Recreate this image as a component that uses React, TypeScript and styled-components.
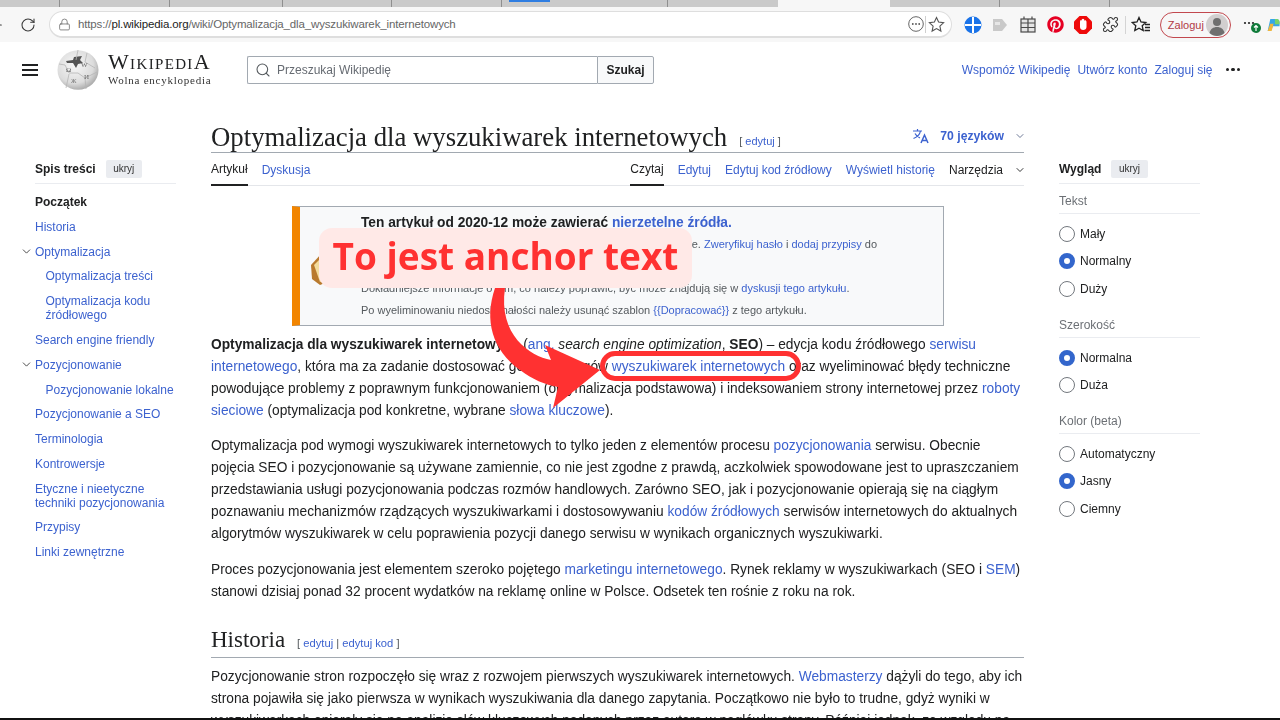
import styled, { createGlobalStyle } from "styled-components";
import { ArrowLeft, ChevronDown, Lock, Puzzle, RotateCw, Search } from "lucide-react";
import { FaPinterest } from "react-icons/fa";

const GlobalStyle = createGlobalStyle`
  html, body { margin: 0; padding: 0; background: #fff; }
  * { box-sizing: border-box; }
  body { font-family: "Liberation Sans", Arial, sans-serif; color: #202122; }
  a { color: #3c62cf; text-decoration: none; }
`;

const Page = styled.div`
  position: relative;
  width: 1280px;
  height: 720px;
  overflow: hidden;
  background: #fff;
`;
// the reference is a slightly soft capture, the annotation sits on top of it
const Capture = styled.div`
  height: 720px;
  display: flex;
  flex-direction: column;
  filter: blur(0.35px);
`;

/* browser chrome */
const TabStrip = styled.div`
  height: 7px;
  display: flex;
  background: #cacaca;
  flex-shrink: 0;
`;
const TabCell = styled.div<{ $w: number; $active?: boolean; $sep?: boolean }>`
  width: ${(p) => p.$w}px;
  height: 100%;
  background: ${(p) => (p.$active ? "#f7f7f7" : "transparent")};
  border-right: ${(p) => (p.$sep ? "1px solid #8f8f8f" : "none")};
`;
const BlueTab = styled.div`
  width: 41px;
  height: 2px;
  background: #2f7de1;
`;
const Toolbar = styled.div`
  height: 35px;
  background: #f7f7f7;
  display: flex;
  align-items: center;
  flex-shrink: 0;
  color: #3a3a3a;
`;
const NavIcons = styled.div`
  width: 49px;
  margin-left: -13px;
  display: flex;
  align-items: center;
  gap: 15px;
  flex-shrink: 0;
`;
const UrlBar = styled.div`
  width: 903px;
  height: 27px;
  margin-left: 13px;
  background: #fff;
  border: 1px solid #dedede;
  border-bottom-width: 2px;
  border-radius: 14px;
  display: flex;
  align-items: center;
  padding: 0 6px 0 8px;
  flex-shrink: 0;
`;
const UrlText = styled.div`
  margin-left: 7px;
  font-size: 11.5px;
  letter-spacing: -0.14px;
  color: #666;
  flex: 1;
  white-space: nowrap;
  b { font-weight: 400; color: #1c1c1c; }
`;
const UrlDivider = styled.span`
  width: 1px;
  height: 17px;
  background: #cfcfcf;
  margin: 0 2px 0 1.5px;
`;
const ExtSlot = styled.div<{ $gap?: number }>`
  width: 27.6px;
  margin-left: ${(p) => p.$gap ?? 0}px;
  display: flex;
  justify-content: center;
  align-items: center;
  flex-shrink: 0;
`;
const ExtRow = styled.div`
  display: flex;
  align-items: center;
  margin-left: 7px;
`;
const ToolDivider = styled.span`
  width: 1px;
  height: 18px;
  background: #d4d4d4;
`;
const LoginPill = styled.div`
  width: 71px;
  height: 26px;
  margin-left: 5px;
  border: 1.5px solid #c2484e;
  border-radius: 13px;
  display: flex;
  align-items: center;
  justify-content: space-between;
  padding: 0 2px 0 7px;
  font-size: 11px;
  color: #b23a46;
  flex-shrink: 0;
`;
const OverflowDots = styled.div`
  width: 24px;
  margin-left: 12px;
  display: flex;
  flex-shrink: 0;
`;

/* wikipedia header */
const WikiHeader = styled.header`
  height: 55px;
  display: flex;
  align-items: center;
  padding-left: 22px;
  flex-shrink: 0;
`;
const Burger = styled.div`
  width: 16px;
  height: 12px;
  border-top: 2px solid #202122;
  border-bottom: 2px solid #202122;
  display: flex;
  align-items: center;
  flex-shrink: 0;
  &::before {
    content: "";
    display: block;
    width: 100%;
    height: 2px;
    background: #202122;
  }
`;
const Logo = styled.div`
  margin-left: 19px;
  display: flex;
  align-items: center;
  gap: 9px;
  width: 190px;
  flex-shrink: 0;
`;
const LogoText = styled.div`
  font-family: "Liberation Serif", serif;
  color: #202122;
  display: flex;
  flex-direction: column;
  margin-top: -2px;
`;
const WordMark = styled.div`
  font-size: 22px;
  line-height: 22px;
  font-variant: small-caps;
  letter-spacing: 1.35px;
  white-space: nowrap;
`;
const Tagline = styled.div`
  font-size: 11px;
  line-height: 14px;
  letter-spacing: 0.75px;
  white-space: nowrap;
  color: #333;
`;
const SearchForm = styled.div`
  width: 407px;
  height: 28px;
  display: flex;
  flex-shrink: 0;
`;
const SearchBox = styled.div`
  flex: 1;
  border: 1px solid #a2a9b1;
  border-right: none;
  border-radius: 2px 0 0 2px;
  display: flex;
  align-items: center;
  padding-left: 7px;
  gap: 6px;
  font-size: 12px;
  color: #666b72;
`;
const SearchButton = styled.div`
  width: 57px;
  border: 1px solid #a2a9b1;
  border-radius: 0 2px 2px 0;
  background: #f8f9fa;
  font-size: 12px;
  font-weight: 700;
  display: flex;
  align-items: center;
  justify-content: center;
  color: #202122;
`;
const UserLinks = styled.nav`
  margin-left: auto;
  margin-right: 40px;
  display: flex;
  align-items: center;
  gap: 7px;
  font-size: 12px;
  white-space: nowrap;
`;
const MoreDots = styled.div`
  display: flex;
  gap: 2px;
  margin-left: 6px;
  i {
    width: 3.5px;
    height: 3.5px;
    border-radius: 50%;
    background: #202122;
    display: block;
  }
`;

/* page columns */
const Columns = styled.div`
  flex: 1;
  min-height: 0;
  overflow: hidden;
  display: grid;
  grid-template-columns: 141px 813px 141px;
  column-gap: 35px;
  padding-left: 35px;
`;
const SideColumn = styled.aside`
  padding-top: 62px;
`;
const SideHead = styled.div`
  height: 25px;
  display: flex;
  align-items: center;
  gap: 10px;
  border-bottom: 1px solid #eaecf0;
  padding-bottom: 5px;
  font-size: 12px;
  font-weight: 700;
`;
const HideButton = styled.span`
  font-size: 10px;
  font-weight: 400;
  background: #eaecf0;
  border-radius: 2px;
  padding: 0 7.5px;
  height: 18px;
  display: inline-flex;
  align-items: center;
  color: #333;
`;
const TocList = styled.div`
  padding-top: 6px;
  display: flex;
  flex-direction: column;
`;
const TocItem = styled.a<{ $sub?: boolean; $current?: boolean }>`
  display: flex;
  align-items: flex-start;
  padding: 5.1px 0 5.7px ${(p) => (p.$sub ? "10.5px" : "0")};
  font-size: 12px;
  line-height: 14px;
  color: ${(p) => (p.$current ? "#202122" : "#3c62cf")};
  font-weight: ${(p) => (p.$current ? 700 : 400)};
  svg { margin: 0 2px 0 -15px; flex-shrink: 0; color: #333; }
`;
const AppearanceGroup = styled.div`
  padding-top: 5px;
  & + & { margin-top: 5.25px; }
`;
const GroupTitle = styled.div`
  font-size: 12px;
  line-height: 14px;
  color: #6c7075;
  padding: 5px 0 5px;
  border-bottom: 1px solid #eaecf0;
  margin-bottom: 6px;
`;
const RadioRow = styled.div`
  display: flex;
  align-items: center;
  gap: 5px;
  height: 27.5px;
  font-size: 12px;
  color: #202122;
`;
const RadioDot = styled.span<{ $on?: boolean }>`
  width: 16px;
  height: 16px;
  border-radius: 50%;
  flex-shrink: 0;
  background: #fff;
  border: ${(p) => (p.$on ? "5px solid #3366cc" : "1px solid #72777d")};
`;

/* article */
const Article = styled.main`
  min-width: 0;
`;
const TitleRow = styled.div`
  height: 56px;
  padding-top: 25px;
  border-bottom: 1px solid #a2a9b1;
  display: flex;
  align-items: flex-start;
  white-space: nowrap;
`;
const Title = styled.h1`
  margin: 0;
  font: 400 26.75px/30px "Liberation Serif", serif;
  color: #202122;
`;
const EditLinks = styled.span`
  font-size: 11px;
  color: #54595d;
  margin-left: 12px;
  margin-top: 13px;
`;
const Languages = styled.div`
  margin-left: auto;
  margin-right: -2px;
  display: flex;
  align-items: center;
  font-size: 12.2px;
  font-weight: 700;
  color: #3c62cf;
  gap: 10px;
  margin-top: 6px;
  svg:last-child { color: #5f6b8c; }
`;
const TabsRow = styled.div`
  height: 33px;
  border-bottom: 1px solid #e4e6ea;
  display: flex;
  align-items: stretch;
  font-size: 12px;
  gap: 14px;
`;
const ArticleTab = styled.a<{ $active?: boolean; $plain?: boolean }>`
  display: flex;
  align-items: center;
  gap: 11px;
  height: 33px;
  color: ${(p) => (p.$active || p.$plain ? "#202122" : "#3c62cf")};
  border-bottom: ${(p) => (p.$active ? "2px solid #202122" : "none")};
  margin-right: ${(p) => (p.$plain ? "-2px" : "0")};
`;
const TabSpacer = styled.div`
  flex: 1;
`;
const Notice = styled.div`
  width: 652px;
  height: 120px;
  margin: 20px 0 8px 81px;
  border: 1px solid #a2a9b1;
  border-left: 8px solid #f28500;
  background: #f8f9fa;
  display: flex;
  overflow: hidden;
`;
const NoticeIcon = styled.div`
  width: 61px;
  padding: 44px 0 0 9px;
  flex-shrink: 0;
`;
const NoticeBody = styled.div`
  padding-top: 5px;
  font-size: 11px;
  line-height: 22px;
  color: #54595d;
  white-space: nowrap;
`;
const NoticeHead = styled.div`
  font-size: 13.74px;
  font-weight: 700;
  height: 21px;
  color: #202122;
`;
const Paragraph = styled.p<{ $tail?: number }>`
  margin: 0 0 ${(p) => p.$tail ?? 13}px;
  font-size: 13.74px;
  line-height: 22px;
  color: #202122;
`;
const SectionHead = styled.div`
  margin-top: 23px;
  height: 32px;
  border-bottom: 1px solid #a2a9b1;
  display: flex;
  align-items: baseline;
  gap: 12px;
  margin-bottom: 8px;
`;
const SectionTitle = styled.h2`
  margin: 0;
  font: 400 23px/28px "Liberation Serif", serif;
  color: #202122;
`;
const SectionEdit = styled.span`
  font-size: 11.2px;
  color: #54595d;
`;
const BottomEdge = styled.div`
  height: 2px;
  background: #111;
  flex-shrink: 0;
`;

/* annotation drawn over the screenshot */
const Callout = styled.div`
  position: absolute;
  left: 319px;
  top: 228px;
  width: 373px;
  height: 60px;
  border-radius: 13px;
  background: #ffe9e7;
  color: #ff3131;
  font: 700 37px/55px "Open Sans", sans-serif;
  text-align: center;
  white-space: nowrap;
`;
const LinkRing = styled.div`
  position: absolute;
  left: 600px;
  top: 351px;
  width: 201px;
  height: 30px;
  border: 5px solid #ff3131;
  border-radius: 15px;
`;
const ArrowLayer = styled.svg`
  position: absolute;
  left: 470px;
  top: 280px;
`;

const Globe = () => (
  <svg width="42" height="40" viewBox="0 0 42 40">
    <defs>
      <radialGradient id="gl" cx="42%" cy="38%" r="70%">
        <stop offset="0%" stopColor="#f8f8f8" />
        <stop offset="65%" stopColor="#dcdcdc" />
        <stop offset="100%" stopColor="#9a9a9a" />
      </radialGradient>
    </defs>
    <ellipse cx="21" cy="20" rx="20.5" ry="19.8" fill="url(#gl)" />
    <path d="M9 11l7-1 1-3 8-1-2 4 3 3-5 1-2 4-3-5-6 0z" fill="#555" />
    <path d="M2 14l6 1 4 8 9 0 7 5 12-6M21 0l-2 10M12 24l-3 14M28 28l1 11M30 3l-2 9 10 6" stroke="#b5b5b5" strokeWidth="0.8" fill="none" />
    <text x="9" y="22" fontSize="7" fill="#555" fontFamily="Liberation Serif">Ω</text>
    <text x="24" y="17" fontSize="7" fill="#666" fontFamily="Liberation Serif">W</text>
    <text x="27" y="29" fontSize="7" fill="#666" fontFamily="Liberation Serif">И</text>
    <text x="14" y="33" fontSize="6" fill="#777" fontFamily="Liberation Serif">Ж</text>
  </svg>
);

const TranslateIcon = () => (
  <svg width="18" height="16" viewBox="0 0 18 16" fill="none" stroke="#3c62cf" strokeWidth="1.2">
    <path d="M1 3h9M5.500 1v2M8.500 3c-.6 3-3 6-7 7.500M3 5.500c1 2 3 3.500 5 4.500" />
    <path d="M9 15l3.500-8 3.500 8M10.200 12.500h4.600" strokeWidth="1.500" />
  </svg>
);

const BookIcon = () => (
  <svg width="26" height="36" viewBox="0 0 26 36">
    <path d="M2 14L13 2l13 6v20L11 34 3 28z" fill="#b97a2e" />
    <path d="M5 14L14 5l12 5v16L11 31z" fill="#f3dc9c" />
  </svg>
);

const BlueCross = () => (
  <svg width="18" height="18" viewBox="0 0 18 18">
    <circle cx="9" cy="9" r="8.500" fill="#1a73e8" />
    <path d="M9 1v16M1 9h16" stroke="#fff" strokeWidth="2" />
  </svg>
);
const GrayTag = () => (
  <svg width="16" height="14" viewBox="0 0 16 14">
    <path d="M1 1h9l5 6-5 6H1z" fill="#c9c9c9" />
    <path d="M3 4h5v3H3z" fill="#e6e6e6" />
  </svg>
);
const CalendarIcon = () => (
  <svg width="16" height="17" viewBox="0 0 16 17" fill="none" stroke="#4a4a4a" strokeWidth="1.200">
    <rect x="1" y="3" width="14" height="13" fill="#e4e4e4" />
    <path d="M1 7h14M1 11.500h14M8 3v13M4 0.500v2.500M12 0.500v2.500" />
  </svg>
);
const StopIcon = () => (
  <svg width="18" height="18" viewBox="0 0 18 18">
    <path d="M5.500 0h7L18 5.500v7L12.500 18h-7L0 12.500v-7z" fill="#ee0a0a" />
    <path d="M6 6.500c0-3 1.500-3 1.500-1.500 0-3 3-3 3 0 0-1.500 2-1 2 1v5c0 2-1.500 3-3.300 3S6 13 6 11z" fill="#fff" />
  </svg>
);
const StarList = () => (
  <svg width="20" height="18" viewBox="0 0 20 18" fill="none" stroke="#222" strokeWidth="1.300">
    <path d="M8 1.500l2 4.500 4.800.5-3.600 3.200 1 4.800L8 12.200l-4.200 2.300 1-4.800L1.200 6.500 6 6z" />
    <path d="M14 8.500h5M14 11.500h5M13.500 14.500h5.500" />
  </svg>
);
const OutlineStar = () => (
  <svg width="17" height="17" viewBox="0 0 17 17" fill="none" stroke="#555" strokeWidth="1.100">
    <path d="M8.500 1.500l2.100 4.600 5 .6-3.700 3.400 1 5-4.400-2.500-4.400 2.500 1-5L1.400 6.700l5-.6z" />
  </svg>
);
const DotsCircle = () => (
  <svg width="16" height="16" viewBox="0 0 16 16" fill="none">
    <circle cx="8" cy="8" r="7.300" stroke="#666" strokeWidth="1" />
    <circle cx="4.800" cy="8" r="0.900" fill="#555" />
    <circle cx="8" cy="8" r="0.900" fill="#555" />
    <circle cx="11.200" cy="8" r="0.900" fill="#555" />
  </svg>
);
const Avatar = () => (
  <svg width="22" height="22" viewBox="0 0 22 22">
    <circle cx="11" cy="11" r="11" fill="#d2cfcf" />
    <circle cx="11" cy="8" r="4" fill="#6f6f6f" />
    <path d="M3.500 19c.8-4 3.800-6 7.500-6s6.700 2 7.500 6c-4 4-11 4-15 0z" fill="#6f6f6f" />
  </svg>
);
const UpdateDots = () => (
  <svg width="24" height="18" viewBox="0 0 24 18">
    <circle cx="2" cy="7" r="1.100" fill="#222" />
    <circle cx="6" cy="7" r="1.100" fill="#222" />
    <circle cx="10" cy="7" r="1.100" fill="#222" />
    <circle cx="13" cy="12" r="5" fill="#0f7b3a" />
    <path d="M13 15V9.500M11 11.500l2-2 2 2" stroke="#fff" strokeWidth="1.200" fill="none" />
  </svg>
);
const CopilotIcon = () => (
  <svg width="20" height="20" viewBox="0 0 20 20">
    <path d="M5 1h9c3 0 5 2 5 5v6H9l-3 7H1z" fill="#35a7e8" />
    <path d="M12 1h3c3 0 4 2 4 5v3h-7z" fill="#79d36a" />
    <path d="M1 19l4-11h5l-3 11z" fill="#f2b63c" />
  </svg>
);

const tocItems: { label: string; sub?: boolean; current?: boolean; fold?: boolean }[] = [
  { label: "Początek", current: true },
  { label: "Historia" },
  { label: "Optymalizacja", fold: true },
  { label: "Optymalizacja treści", sub: true },
  { label: "Optymalizacja kodu źródłowego", sub: true },
  { label: "Search engine friendly" },
  { label: "Pozycjonowanie", fold: true },
  { label: "Pozycjonowanie lokalne", sub: true },
  { label: "Pozycjonowanie a SEO" },
  { label: "Terminologia" },
  { label: "Kontrowersje" },
  { label: "Etyczne i nieetyczne techniki pozycjonowania" },
  { label: "Przypisy" },
  { label: "Linki zewnętrzne" },
];

const appearance = [
  { title: "Tekst", options: ["Mały", "Normalny", "Duży"], on: 1 },
  { title: "Szerokość", options: ["Normalna", "Duża"], on: 0 },
  { title: "Kolor (beta)", options: ["Automatyczny", "Jasny", "Ciemny"], on: 1 },
];

const App = () => {
  return (
    <Page>
      <GlobalStyle />
      <Capture>
        <TabStrip>
          <TabCell $w={60} $sep />
          <TabCell $w={110} $sep />
          <TabCell $w={113} $sep />
          <TabCell $w={109} $sep />
          <TabCell $w={110} $sep />
          <TabCell $w={7} />
          <BlueTab />
          <TabCell $w={118} $sep />
          <TabCell $w={110} />
          <TabCell $w={112} $active />
          <TabCell $w={110} $sep />
          <TabCell $w={110} $sep />
        </TabStrip>
        <Toolbar>
          <NavIcons>
            <ArrowLeft size={18} strokeWidth={1.6} />
            <RotateCw size={16} strokeWidth={1.6} />
          </NavIcons>
          <UrlBar>
            <Lock size={13} strokeWidth={1.4} color="#666" />
            <UrlText>
              https://<b>pl.wikipedia.org</b>/wiki/Optymalizacja_dla_wyszukiwarek_internetowych
            </UrlText>
            <DotsCircle />
            <UrlDivider />
            <OutlineStar />
          </UrlBar>
          <ExtRow>
            <ExtSlot><BlueCross /></ExtSlot>
            <ExtSlot><GrayTag /></ExtSlot>
            <ExtSlot><CalendarIcon /></ExtSlot>
            <ExtSlot><FaPinterest size={17} color="#e60023" /></ExtSlot>
            <ExtSlot><StopIcon /></ExtSlot>
            <ExtSlot><Puzzle size={17} strokeWidth={1.5} color="#333" /></ExtSlot>
          </ExtRow>
          <ToolDivider />
          <ExtSlot $gap={2}><StarList /></ExtSlot>
          <LoginPill>
            Zaloguj
            <Avatar />
          </LoginPill>
          <OverflowDots><UpdateDots /></OverflowDots>
          <CopilotIcon />
        </Toolbar>

        <WikiHeader>
          <Burger />
          <Logo>
            <Globe />
            <LogoText>
              <WordMark>WikipediA</WordMark>
              <Tagline>Wolna encyklopedia</Tagline>
            </LogoText>
          </Logo>
          <SearchForm>
            <SearchBox>
              <Search size={16} strokeWidth={1.6} color="#54595d" />
              Przeszukaj Wikipedię
            </SearchBox>
            <SearchButton>Szukaj</SearchButton>
          </SearchForm>
          <UserLinks>
            <a>Wspomóż Wikipedię</a>
            <a>Utwórz konto</a>
            <a>Zaloguj się</a>
            <MoreDots><i /><i /><i /></MoreDots>
          </UserLinks>
        </WikiHeader>

        <Columns>
          <SideColumn>
            <SideHead>
              Spis treści <HideButton>ukryj</HideButton>
            </SideHead>
            <TocList>
              {tocItems.map((item, i) => (
                <TocItem key={i} $sub={item.sub} $current={item.current}>
                  {item.fold && <ChevronDown size={13} strokeWidth={1.6} />}
                  <span>{item.label}</span>
                </TocItem>
              ))}
            </TocList>
          </SideColumn>

          <Article>
            <TitleRow>
              <Title>Optymalizacja dla wyszukiwarek internetowych</Title>
              <EditLinks>[ <a>edytuj</a> ]</EditLinks>
              <Languages>
                <TranslateIcon />
                70 języków
                <ChevronDown size={12} strokeWidth={1.8} />
              </Languages>
            </TitleRow>
            <TabsRow>
              <ArticleTab $active>Artykuł</ArticleTab>
              <ArticleTab>Dyskusja</ArticleTab>
              <TabSpacer />
              <ArticleTab $active>Czytaj</ArticleTab>
              <ArticleTab>Edytuj</ArticleTab>
              <ArticleTab>Edytuj kod źródłowy</ArticleTab>
              <ArticleTab>Wyświetl historię</ArticleTab>
              <ArticleTab $plain>
                Narzędzia
                <ChevronDown size={12} strokeWidth={1.8} />
              </ArticleTab>
            </TabsRow>

            <Notice>
              <NoticeIcon><BookIcon /></NoticeIcon>
              <NoticeBody>
                <NoticeHead>Ten artykuł od 2020-12 może zawierać <a>nierzetelne źródła.</a></NoticeHead>
                <div>Niektóre informacje w tym tekście mogą być wątpliwe lub nieaktualne. <a>Zweryfikuj hasło</a> i <a>dodaj przypisy</a> do</div>
                <div>wiarygodnych źródeł.</div>
                <div>Dokładniejsze informacje o tym, co należy poprawić, być może znajdują się w <a>dyskusji tego artykułu</a>.</div>
                <div>Po wyeliminowaniu niedoskonałości należy usunąć szablon <a>{"{{Dopracować}}"}</a> z tego artykułu.</div>
              </NoticeBody>
            </Notice>

            <Paragraph>
              <b>Optymalizacja dla wyszukiwarek internetowych</b> (<a>ang.</a> <i>search engine optimization</i>, <b>SEO</b>) – edycja kodu źródłowego <a>serwisu internetowego</a>, która ma za zadanie dostosować go do wymogów <a>wyszukiwarek internetowych</a> oraz wyeliminować błędy techniczne powodujące problemy z poprawnym funkcjonowaniem (optymalizacja podstawowa) i indeksowaniem strony internetowej przez <a>roboty sieciowe</a> (optymalizacja pod konkretne, wybrane <a>słowa kluczowe</a>).
            </Paragraph>
            <Paragraph $tail={14}>
              Optymalizacja pod wymogi wyszukiwarek internetowych to tylko jeden z elementów procesu <a>pozycjonowania</a> serwisu. Obecnie pojęcia SEO i pozycjonowanie są używane zamiennie, co nie jest zgodne z prawdą, aczkolwiek spowodowane jest to upraszczaniem przedstawiania usługi pozycjonowania podczas rozmów handlowych. Zarówno SEO, jak i pozycjonowanie opierają się na ciągłym poznawaniu mechanizmów rządzących wyszukiwarkami i dostosowywaniu <a>kodów źródłowych</a> serwisów internetowych do aktualnych algorytmów wyszukiwarek w celu poprawienia pozycji danego serwisu w wynikach organicznych wyszukiwarki.
            </Paragraph>
            <Paragraph $tail={0}>
              Proces pozycjonowania jest elementem szeroko pojętego <a>marketingu internetowego</a>. Rynek reklamy w wyszukiwarkach (SEO i <a>SEM</a>) stanowi dzisiaj ponad 32 procent wydatków na reklamę online w Polsce. Odsetek ten rośnie z roku na rok.
            </Paragraph>

            <SectionHead>
              <SectionTitle>Historia</SectionTitle>
              <SectionEdit>[ <a>edytuj</a> | <a>edytuj kod</a> ]</SectionEdit>
            </SectionHead>
            <Paragraph>
              Pozycjonowanie stron rozpoczęło się wraz z rozwojem pierwszych wyszukiwarek internetowych. <a>Webmasterzy</a> dążyli do tego, aby ich strona pojawiła się jako pierwsza w wynikach wyszukiwania dla danego zapytania. Początkowo nie było to trudne, gdyż wyniki w wyszukiwarkach opierały się na analizie słów kluczowych podanych przez autora w nagłówku strony. Później jednak, ze względu na ich
            </Paragraph>
          </Article>

          <SideColumn>
            <SideHead>
              Wygląd <HideButton>ukryj</HideButton>
            </SideHead>
            {appearance.map((group) => (
              <AppearanceGroup key={group.title}>
                <GroupTitle>{group.title}</GroupTitle>
                {group.options.map((opt, i) => (
                  <RadioRow key={opt}>
                    <RadioDot $on={i === group.on} />
                    {opt}
                  </RadioRow>
                ))}
              </AppearanceGroup>
            ))}
          </SideColumn>
        </Columns>
        <BottomEdge />
      </Capture>

      <Callout>To jest anchor text</Callout>
      <ArrowLayer width="140" height="135" viewBox="470 280 140 135">
        <path
          d="M495 288C484 320 492 350 520 370C532 379 545 385 558 387L553 408L600 370L545 345L551 360C530 356 498 335 505 288Z"
          fill="#ff3131"
        />
      </ArrowLayer>
      <LinkRing />
    </Page>
  );
};

export default App;
